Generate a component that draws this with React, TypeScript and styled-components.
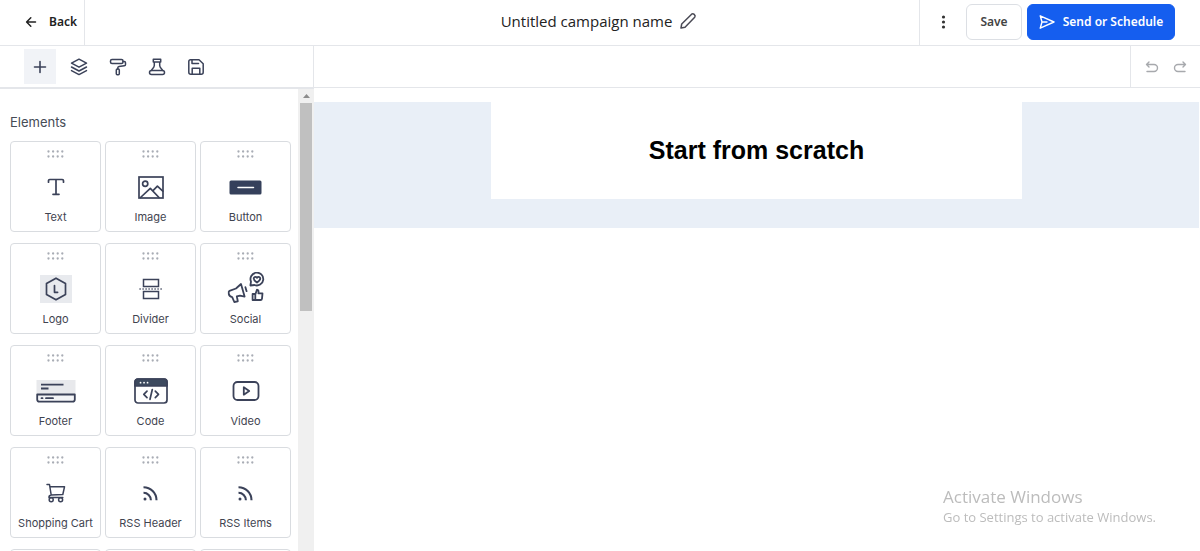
import React from "react";
import styled, { createGlobalStyle } from "styled-components";

const ink = "#3b4259";
const line = "#e4e6ea";
const ui = `"Noto Sans", "Open Sans", sans-serif`;

const GlobalStyle = createGlobalStyle`
  *, *::before, *::after { box-sizing: border-box; }
  body { margin: 0; background: #fff; color: #222; font-family: Inter, sans-serif; }
  button { font: inherit; color: inherit; cursor: pointer; }
  svg { display: block; flex: none; }
`;

const Page = styled.div`
  display: flex;
  flex-direction: column;
  height: 100vh;
  overflow: hidden;
`;

const Header = styled.header`
  display: grid;
  grid-template-columns: 1fr auto 1fr;
  flex: none;
  height: 46px;
  border-bottom: 1px solid ${line};
  font-family: ${ui};
`;

const BackButton = styled.button`
  display: flex;
  align-items: center;
  justify-self: start;
  gap: 12px;
  width: 85px;
  padding: 0 0 2px 25px;
  border: 0;
  border-right: 1px solid ${line};
  background: none;
  font-size: 12px;
  font-weight: 600;
`;

const CampaignName = styled.div`
  display: flex;
  align-items: center;
  gap: 7px;
  padding: 0 2px 3px 0;
`;

const Title = styled.h1`
  margin: 0;
  font: 400 15px/20px "Open Sans", sans-serif;
`;

const GhostButton = styled.button`
  display: flex;
  padding: 0;
  border: 0;
  background: none;
`;

const HeaderActions = styled.div`
  display: flex;
  align-items: center;
  justify-self: end;
  padding: 0 25px 2px 14px;
  border-left: 1px solid ${line};
`;

const ActionButton = styled.button<{ $primary?: boolean }>`
  display: flex;
  align-items: center;
  justify-content: center;
  gap: 8px;
  height: 36px;
  width: ${(p) => (p.$primary ? 148 : 56)}px;
  margin-left: ${(p) => (p.$primary ? 5 : 14)}px;
  padding: 0;
  border: 1px solid ${(p) => (p.$primary ? "#155eef" : "#dcdfe4")};
  border-radius: 6px;
  background: ${(p) => (p.$primary ? "#155eef" : "#fff")};
  color: ${(p) => (p.$primary ? "#fff" : "#444")};
  font-size: 12px;
  font-weight: 600;
  white-space: nowrap;
`;

const Toolbar = styled.div`
  display: flex;
  flex: none;
  height: 42px;
  border-bottom: 1px solid ${line};
`;

const Tabs = styled.nav`
  display: flex;
  align-items: center;
  gap: 7px;
  width: 314px;
  padding-left: 24px;
  border-right: 1px solid ${line};
`;

const Tab = styled.button<{ $active?: boolean }>`
  display: grid;
  place-items: center;
  width: 32px;
  height: 35px;
  padding: 0;
  border: 0;
  background: ${(p) => (p.$active ? "#f1f3f7" : "none")};
`;

const History = styled.div`
  display: flex;
  align-items: center;
  gap: 14px;
  margin-left: auto;
  padding: 0 13px 0 14px;
  border-left: 1px solid ${line};
`;

const Workspace = styled.div`
  display: flex;
  flex: 1;
  min-height: 0;
`;

const Sidebar = styled.aside`
  display: flex;
  flex: none;
  width: 314px;
  overflow: hidden;
  border-top: 1px solid ${line};
`;

const Panel = styled.div`
  flex: 1;
  padding: 24px 7px 0 10px;
`;

const PanelTitle = styled.h2`
  margin: 0 0 10px;
  font-size: 13px;
  line-height: 18px;
  font-weight: 400;
  color: #464c56;
`;

const ElementGrid = styled.div`
  display: grid;
  grid-template-columns: repeat(3, 1fr);
  gap: 11px 4px;
`;

const Card = styled.button`
  display: flex;
  flex-direction: column;
  align-items: center;
  height: 91px;
  padding: 8px 0 0;
  border: 1px solid #d9dce0;
  border-radius: 4px;
  background: #fff;
  color: #3f4450;
  font-size: 11px;
  font-weight: 400;
  line-height: 14px;
  white-space: nowrap;
`;

const Glyph = styled.span`
  display: grid;
  place-items: center;
  height: 36px;
  margin: 11px 0 5px;
`;

const ScrollTrack = styled.div`
  display: flex;
  flex-direction: column;
  align-items: center;
  width: 16px;
  background: #f0f0f0;
`;

const ScrollArrow = styled.span`
  display: grid;
  place-items: center;
  height: 14px;
`;

const ScrollThumb = styled.span`
  width: 12px;
  height: 208px;
  background: #c0c0c0;
`;

const Canvas = styled.main`
  flex: 1;
  padding: 14px 1px 0 0;
`;

const Band = styled.section`
  padding-bottom: 29px;
  background: #e9eff7;
`;

const Block = styled.div`
  width: 60%;
  margin: 0 auto;
  padding: 32px 0;
  background: #fff;
  text-align: center;
`;

const Heading = styled.h2`
  margin: 0;
  font: 700 25px/33px "Liberation Sans", Arial, sans-serif;
  color: #000;
`;

const Watermark = styled.aside`
  position: fixed;
  right: 44px;
  bottom: 25px;
  color: #bcbcbc;
  font-family: "Open Sans", sans-serif;
  pointer-events: none;
`;

const WatermarkLine = styled.p<{ $large?: boolean }>`
  margin: 0;
  font-size: ${(p) => (p.$large ? 17 : 13)}px;
  line-height: ${(p) => (p.$large ? 22 : 18)}px;
`;

type IconProps = {
  w?: number;
  h?: number;
  stroke?: string;
  sw?: number;
  children: React.ReactNode;
};

const Icon = ({ w = 18, h = w, stroke = ink, sw = 1.5, children }: IconProps) => (
  <svg
    width={w}
    height={h}
    viewBox={`0 0 ${w} ${h}`}
    fill="none"
    stroke={stroke}
    strokeWidth={sw}
    strokeLinecap="round"
    strokeLinejoin="round"
    aria-hidden="true"
  >
    {children}
  </svg>
);

const Grip = () => (
  <Icon w={17} h={8} stroke="none">
    {[0, 1, 2, 3].map((c) =>
      [0, 1].map((r) => <circle key={`${c}${r}`} cx={1.5 + c * 4.6} cy={1.5 + r * 5} r="1.15" fill="#a9adb5" />)
    )}
  </Icon>
);

const RssIcon = () => (
  <Icon w={17} h={17} sw={2.1}>
    <path d="M1.5 2.2a13 13 0 0 1 13 13M1.5 7.8a7.4 7.4 0 0 1 7.4 7.4" strokeLinecap="butt" />
    <circle cx="3" cy="14" r="1.5" fill={ink} stroke="none" />
  </Icon>
);

const elements: { name: string; icon?: React.ReactNode }[] = [
  {
    name: "Text",
    icon: (
      <Icon w={18} h={18} sw={1.7}>
        <path d="M1.5 4.2V2.8Q1.5 1.5 2.8 1.5H15.2Q16.5 1.5 16.5 2.8V4.2M9 1.5V16.3M6 16.3H12" />
      </Icon>
    ),
  },
  {
    name: "Image",
    icon: (
      <Icon w={26} h={23} sw={1.7}>
        <rect x="1" y="1" width="24" height="21" strokeLinejoin="miter" />
        <circle cx="7.2" cy="7.8" r="2.6" />
        <path d="M2.5 21.5 12.3 12.3 21 21.5M15.5 14.2 19.4 10.2 24.8 15.2" />
      </Icon>
    ),
  },
  {
    name: "Button",
    icon: (
      <Icon w={33} h={15}>
        <rect x="0.5" y="0.5" width="32" height="14" rx="1.5" fill="#35405b" stroke="none" />
        <path d="M9 7.4H24.5" stroke="#fff" />
      </Icon>
    ),
  },
  {
    name: "Logo",
    icon: (
      <Icon w={32} h={28} sw={1.7}>
        <rect width="32" height="28" fill="#e8eaee" stroke="none" />
        <path d="M16 3.2 25.5 8.6V19.4L16 24.8 6.5 19.4V8.6Z" />
        <path d="M14.5 10.5V17.3H17.6" />
      </Icon>
    ),
  },
  {
    name: "Divider",
    icon: (
      <Icon w={24} h={22}>
        <g strokeLinejoin="miter">
          <rect x="4.5" y="1.5" width="15" height="7" />
          <rect x="4.5" y="13.5" width="15" height="7" />
        </g>
        <path d="M1 11H23" strokeDasharray="0.2 2.8" />
      </Icon>
    ),
  },
  {
    name: "Social",
    icon: (
      <Icon w={38} h={34} sw={1.8}>
        <path d="M2.5 18.8 9 16.5 14 12 17.6 24.6 13 23.6 9.8 24.3 10.8 29.3 7.3 30 5.2 25.1Q2.3 24.6 1.8 22 1.3 19.6 2.5 18.8Z" />
        <path d="M18.4 15.2 19.6 19.2" />
        <path d="M23.4 13.5 24 9.6A6.4 6.4 0 1 1 27.5 13Z" />
        <path d="M30 10.6Q26.3 8 26.8 6 28 4 30 5.7 32 4 33.2 6 33.7 8 30 10.6Z" />
        <path d="M25.6 22H28.5L30 17.6Q32 17.6 31.4 21.4H35.5L35 26.6Q34.8 28 33.5 28H25.6ZM28.3 22.5V27.5" />
      </Icon>
    ),
  },
  {
    name: "Footer",
    icon: (
      <Icon w={40} h={23} sw={1.8}>
        <rect x="0.5" width="39" height="15" fill="#e8e9ec" stroke="none" />
        <path d="M5 4.7H27.5M5 8.5H12.5" strokeLinecap="butt" />
        <path d="M1.2 14.5H38.8V19.5Q38.8 21.7 36.5 21.7H3.5Q1.2 21.7 1.2 19.5Z" fill="#f4f5f7" />
        <path d="M5.5 18.2H6.5M10 18.2H17" />
      </Icon>
    ),
  },
  {
    name: "Code",
    icon: (
      <Icon w={34} h={26} sw={1.7}>
        <rect x="1" y="1" width="32" height="24" rx="3" />
        <path d="M1 8V4Q1 1 4 1H30Q33 1 33 4V8Z" fill="#3d4a5f" />
        <path d="M6.5 4.7H6.6M10 4.7H10.1M13.5 4.7H13.6" stroke="#fff" />
        <path d="M13 13.2 9.8 16.4 13 19.6M21.3 13.2 24.5 16.4 21.3 19.6M18.3 11.5 16 21.3" />
      </Icon>
    ),
  },
  {
    name: "Video",
    icon: (
      <Icon w={28} h={22} sw={1.8}>
        <rect x="1.5" y="2" width="25" height="18" rx="4" />
        <path d="M11.8 7.3V14.7L17.2 11Z" />
      </Icon>
    ),
  },
  {
    name: "Shopping Cart",
    icon: (
      <Icon w={20} h={20}>
        <path d="M1 1.5H3.5L5.2 12M4 3.8H18.5L16.8 11.5 5.2 12Q2.8 12.4 3 14.6H16.8" />
        <circle cx="5.2" cy="16.7" r="2" />
        <circle cx="14.6" cy="16.7" r="2" />
      </Icon>
    ),
  },
  { name: "RSS Header", icon: <RssIcon /> },
  { name: "RSS Items", icon: <RssIcon /> },
  { name: "" },
  { name: "" },
  { name: "" },
];

export default function App() {
  return (
    <Page>
      <GlobalStyle />
      <Header>
        <BackButton>
          <Icon w={12} h={12} stroke="#222">
            <path d="M10.5 6H2M5.8 1.8 1.6 6 5.8 10.2" />
          </Icon>
          Back
        </BackButton>
        <CampaignName>
          <Title>Untitled campaign name</Title>
          <GhostButton aria-label="Rename campaign">
            <Icon w={18} h={18} stroke="#4a4a55">
              <path d="M2 16 2.7 12 12.6 2.2Q13.8 1.2 15.2 2.4 16.8 3.9 15.7 5.3L6 15.2Z" />
            </Icon>
          </GhostButton>
        </CampaignName>
        <HeaderActions>
          <GhostButton aria-label="More options">
            <Icon w={18} h={18} stroke="none">
              {[4, 9, 14].map((y) => (
                <circle key={y} cx="9.5" cy={y} r="1.6" fill="#333" />
              ))}
            </Icon>
          </GhostButton>
          <ActionButton>Save</ActionButton>
          <ActionButton $primary>
            <Icon w={16} h={16} stroke="#fff" sw={1.4}>
              <path d="M1.2 1.8 15 8 1.2 14.2 3 8ZM3 8H8" />
            </Icon>
            Send or Schedule
          </ActionButton>
        </HeaderActions>
      </Header>

      <Toolbar>
        <Tabs aria-label="Editor tools">
          <Tab $active aria-label="Add element">
            <Icon w={14} h={14} sw={1.6}>
              <path d="M7 1.5V12.5M1.5 7H12.5" />
            </Icon>
          </Tab>
          <Tab aria-label="Layers">
            <Icon>
              <path d="M9 1.2 16.5 5.2 9 9.2 1.5 5.2ZM1.5 9 9 13 16.5 9M1.5 12.6 9 16.6 16.5 12.6" />
            </Icon>
          </Tab>
          <Tab aria-label="Styles">
            <Icon>
              <rect x="1.5" y="1.5" width="12.5" height="4" rx="1.5" />
              <path d="M14 3.5H15.3Q16.5 3.5 16.5 4.7V6.5Q16.5 7.7 15.3 7.8L10 8.5Q8.8 8.7 8.8 9.8V11" />
              <rect x="7.3" y="11" width="3" height="5.8" rx="1" />
            </Icon>
          </Tab>
          <Tab aria-label="Testing">
            <Icon>
              <path d="M5.3 1.3H12.7V4H5.3ZM6.3 4V7.5Q6.3 9 4.6 10.8L3.3 12.4M11.7 4V7.5Q11.7 9 13.4 10.8L14.7 12.4" />
              <rect x="1.5" y="12.4" width="15" height="4.2" rx="2" />
            </Icon>
          </Tab>
          <Tab aria-label="Saved blocks">
            <Icon>
              <path d="M3.5 1.8H12L16.2 5.8V14.2Q16.2 16.2 14.2 16.2H3.8Q1.8 16.2 1.8 14.2V3.5Q1.8 1.8 3.5 1.8ZM5 2V5.5H11.5M5.2 16V10.3H12.8V16" />
            </Icon>
          </Tab>
        </Tabs>
        <History>
          <GhostButton aria-label="Undo">
            <Icon w={14} h={14} stroke="#a7a9ad" sw={1.4}>
              <path d="M4 2 1.5 4.5 4 7M1.5 4.5H9A3.5 3.5 0 0 1 9 11.5H2" />
            </Icon>
          </GhostButton>
          <GhostButton aria-label="Redo">
            <Icon w={14} h={14} stroke="#a7a9ad" sw={1.4}>
              <path d="M10 2 12.5 4.5 10 7M12.5 4.5H5A3.5 3.5 0 0 0 5 11.5H12" />
            </Icon>
          </GhostButton>
        </History>
      </Toolbar>

      <Workspace>
        <Sidebar>
          <Panel>
            <PanelTitle>Elements</PanelTitle>
            <ElementGrid>
              {elements.map((el, i) => (
                <Card key={i}>
                  <Grip />
                  <Glyph>{el.icon}</Glyph>
                  {el.name}
                </Card>
              ))}
            </ElementGrid>
          </Panel>
          <ScrollTrack>
            <ScrollArrow>
              <svg width="7" height="4" viewBox="0 0 7 4" aria-hidden="true">
                <path d="M0 4 3.5 0 7 4Z" fill="#8c8c8c" />
              </svg>
            </ScrollArrow>
            <ScrollThumb />
          </ScrollTrack>
        </Sidebar>
        <Canvas>
          <Band>
            <Block>
              <Heading>Start from scratch</Heading>
            </Block>
          </Band>
        </Canvas>
      </Workspace>

      <Watermark>
        <WatermarkLine $large>Activate Windows</WatermarkLine>
        <WatermarkLine>Go to Settings to activate Windows.</WatermarkLine>
      </Watermark>
    </Page>
  );
}
